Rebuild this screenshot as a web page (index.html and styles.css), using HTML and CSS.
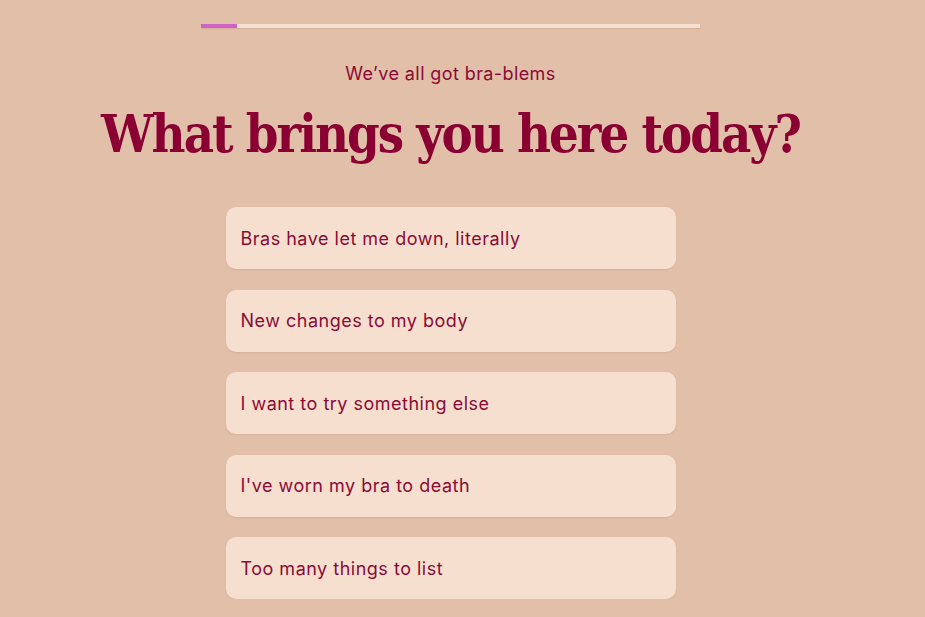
FILE: index.html
```html
<!DOCTYPE html>
<html lang="en">
<head>
    <meta charset="UTF-8">
    <meta name="viewport" content="width=device-width, initial-scale=1.0">
    <title>Bra Quiz</title>
    <link rel="stylesheet" href="styles.css">
</head>
<body>
    <div class="quiz">
        <div class="progress">
            <div class="progress-fill" style="width: 7.2%"></div>
        </div>

        <p class="eyebrow">We’ve all got bra-blems</p>
        <h1 class="title">What brings you here today?</h1>

        <div class="options">
            <button class="option">Bras have let me down, literally</button>
            <button class="option">New changes to my body</button>
            <button class="option">I want to try something else</button>
            <button class="option">I've worn my bra to death</button>
            <button class="option">Too many things to list</button>
        </div>
    </div>
</body>
</html>
```

FILE: styles.css
```css
:root {
    --bg: #e2bfa8;
    --card: #f6dfcf;
    --berry: #8b0a36;
    --track: #f7dfd0;
    --fill: #d163c8;
}

body {
    margin: 0;
    background-color: var(--bg);
    color: var(--berry);
    font-family: 'Inter', 'Open Sans', sans-serif;
    overflow: hidden;
}

.quiz {
    display: flex;
    flex-direction: column;
    align-items: center;
    padding: 24px 24px 0 0;
}

.progress {
    width: 499px;
    height: 4px;
    background-color: var(--track);
    box-shadow: 0 1px 1px rgba(150, 90, 60, 0.15);
}

.progress-fill {
    height: 100%;
    background-color: var(--fill);
}

.eyebrow {
    margin: 35px 0 0;
    font-size: 18px;
    line-height: 22px;
    letter-spacing: 0.4px;
}

.title {
    margin: 15px 0 0;
    font-family: 'DejaVu Serif Condensed', 'DejaVu Serif', Georgia, serif;
    font-weight: bold;
    font-size: 52px;
    line-height: 68px;
    letter-spacing: -2px;
    color: #8a0033;
}

.options {
    display: flex;
    flex-direction: column;
    gap: 20.5px;
    margin-top: 39px;
}

.option {
    width: 450px;
    height: 62px;
    padding: 0 15px;
    border: none;
    border-radius: 10px;
    background-color: var(--card);
    color: var(--berry);
    font-family: 'Inter', 'Open Sans', sans-serif;
    font-size: 18px;
    letter-spacing: 0.5px;
    text-align: left;
    box-shadow: 0 1px 2px rgba(150, 90, 60, 0.12);
    cursor: pointer;
}
```
